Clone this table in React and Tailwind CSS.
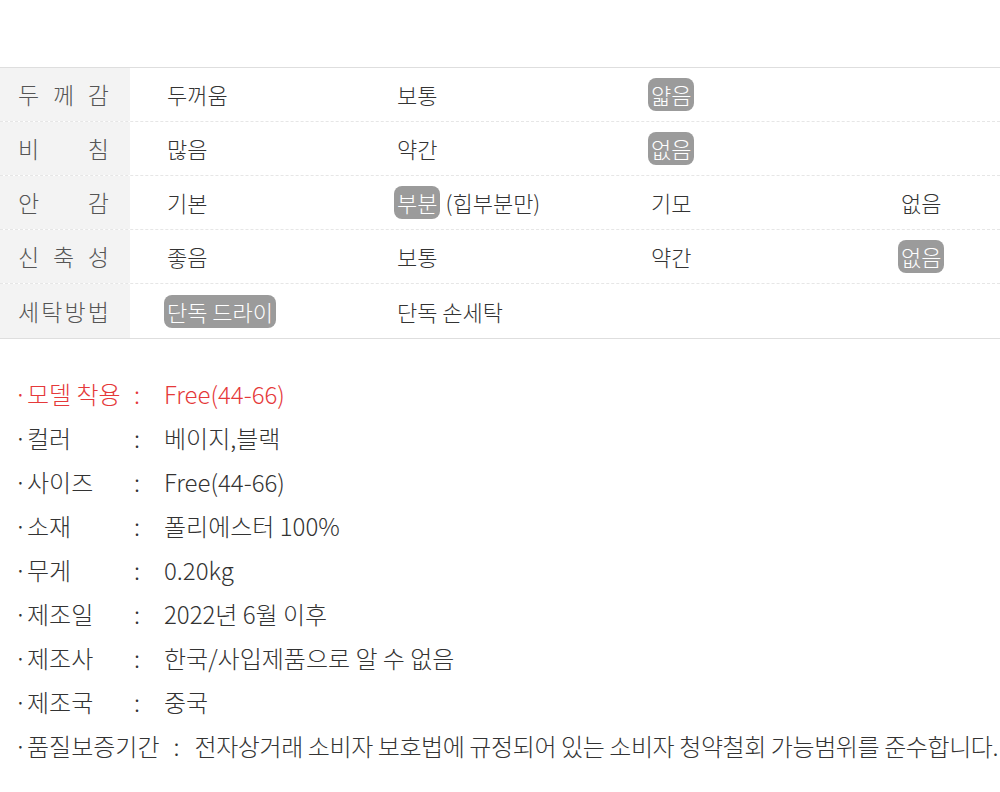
import React from 'react';

const rows = [
  { label: ['두', '께', '감'], cells: [{ t: '두꺼움' }, { t: '보통' }, { t: '얇음', on: true }, null] },
  { label: ['비', '침'], cells: [{ t: '많음' }, { t: '약간' }, { t: '없음', on: true }, null] },
  { label: ['안', '감'], cells: [{ t: '기본' }, { t: '부분', on: true, extra: '(힙부분만)' }, { t: '기모' }, { t: '없음' }] },
  { label: ['신', '축', '성'], cells: [{ t: '좋음' }, { t: '보통' }, { t: '약간' }, { t: '없음', on: true }] },
  { label: ['세', '탁', '방', '법'], cells: [{ t: '단독 드라이', on: true }, { t: '단독 손세탁' }, null, null] },
];

const specs = [
  { k: '모델 착용', v: 'Free(44-66)', red: true },
  { k: '컬러', v: '베이지,블랙' },
  { k: '사이즈', v: 'Free(44-66)' },
  { k: '소재', v: '폴리에스터 100%' },
  { k: '무게', v: '0.20kg' },
  { k: '제조일', v: '2022년 6월 이후' },
  { k: '제조사', v: '한국/사입제품으로 알 수 없음' },
  { k: '제조국', v: '중국' },
  { k: '품질보증기간', v: '전자상거래 소비자 보호법에 규정되어 있는 소비자 청약철회 가능범위를 준수합니다.', long: true },
];

const colW = ['w-[267px] pl-[37px]', 'w-[252px]', 'w-[250px] pl-[2px]', 'flex-1 pl-[2px]'];

function Cell({ c }) {
  if (!c) return null;
  return (
    <span className="whitespace-nowrap">
      {c.on ? (
        <span className="-ml-[3px] inline-block rounded-[8px] bg-[#9b9b9b] px-[3px] leading-[33px] text-white">{c.t}</span>
      ) : (
        c.t
      )}
      {c.extra && <span className="ml-[5px]">{c.extra}</span>}
    </span>
  );
}

export default function App() {
  return (
    <div className="w-[1000px] h-[792px] bg-white overflow-hidden text-[#333]" style={{ fontFamily: '"Noto Sans CJK KR", "Noto Sans", sans-serif' }}>
      <div className="h-[67px]" />
      <div className="border-t border-b border-[#dedede]">
        {rows.map((r, i) => (
          <div key={i} className={`flex h-[54px] ${i < rows.length - 1 ? 'border-b border-dashed border-[#e6e6e6]' : ''}`}>
            <div className="w-[130px] bg-[#f3f3f3] flex items-center pl-[18px]">
              <div className="w-[91px] flex justify-between text-[23px] font-light text-[#555]">
                {r.label.map((ch, j) => (
                  <span key={j}>{ch}</span>
                ))}
              </div>
            </div>
            <div className="flex-1 flex items-center text-[22px] font-light">
              {r.cells.map((c, j) => (
                <div key={j} className={colW[j]}>
                  <Cell c={c} />
                </div>
              ))}
            </div>
          </div>
        ))}
      </div>
      <div className="pt-[33px] pl-[14px] text-[24px] font-light">
        {specs.map((s, i) => (
          <div key={i} className={`flex items-center h-[44px] whitespace-nowrap ${s.red ? 'text-[#e5393a]' : 'text-[#333]'}`}>
            <span className={`${s.long ? '' : 'min-w-[118px]'}`}>·{s.k}</span>
            <span className={`${s.long ? 'ml-[14px] mr-[15px]' : 'ml-[2px] mr-[24px]'}`}>:</span>
            <span className={s.long ? 'tracking-[-0.4px]' : ''}>{s.v}</span>
          </div>
        ))}
      </div>
    </div>
  );
}
